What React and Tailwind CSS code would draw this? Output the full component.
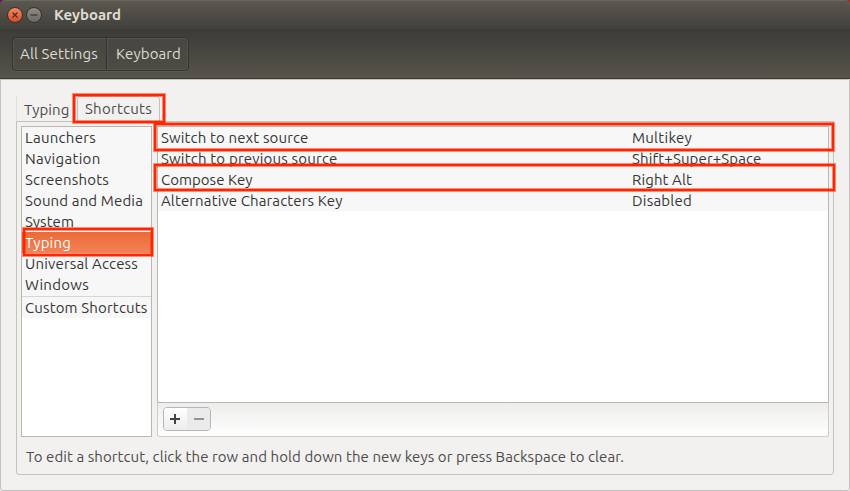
import { useLayoutEffect, useRef } from "react";

// Text run whose tracking is adjusted so that it spans the given width.
function T({ w, children }) {
  const ref = useRef(null);
  useLayoutEffect(() => {
    const fit = () => {
      const el = ref.current;
      if (!el) return;
      el.style.letterSpacing = "0px";
      const natural = el.getBoundingClientRect().width;
      el.style.letterSpacing = `${(w - natural) / children.length}px`;
    };
    fit();
    document.fonts?.ready.then(fit);
  }, [w, children]);
  return (
    <span ref={ref} className="inline-block whitespace-nowrap">
      {children}
    </span>
  );
}

const categories = [
  ["Launchers", 71],
  ["Navigation", 75.5],
  ["Screenshots", 84],
  ["Sound and Media", 118],
  ["System", 49],
  ["Typing", 46],
  ["Universal Access", 113],
  ["Windows", 64],
];

const shortcuts = [
  ["Switch to next source", 147.5, "Multikey", 60],
  ["Switch to previous source", 176.5, "Shift+Super+Space", 129.5],
  ["Compose Key", 91.5, "Right Alt", 60],
  ["Alternative Characters Key", 181.5, "Disabled", 60],
];

function Highlight({ className }) {
  return (
    <div
      className={`pointer-events-none absolute border-2 border-[#ff2600] shadow-[0_0_0_1px_#ff260080,inset_0_0_0_1px_#ff260080] ${className}`}
    />
  );
}

function WindowButton({ close }) {
  return (
    <span
      className={`flex size-4 items-center justify-center rounded-full border border-[#33322e] bg-linear-to-b ${
        close ? "from-[#f58560] to-[#dc4c1c]" : "from-[#8e8c84] to-[#6b6963]"
      }`}
    >
      <svg width="8" height="8" viewBox="0 0 8 8" fill="none" stroke="#373530" strokeWidth="1.2">
        <path d={close ? "M1.5 1.5 6.5 6.5M6.5 1.5 1.5 6.5" : "M.5 4H7.5"} />
      </svg>
    </span>
  );
}

export default function App() {
  return (
    <div className="relative flex h-[491px] w-[850px] flex-col overflow-hidden bg-[#f2f1f0] font-['Ubuntu','Noto_Sans',sans-serif] text-[15px] leading-[21px] text-[#363636]">
      <div className="shrink-0 bg-linear-to-r from-[#641d50] to-[#a52c2c]">
        <header className="flex h-[29px] items-center rounded-t-[5px] border-t border-[#6a675e] bg-linear-to-b from-[#5b5850] to-[#41403b] pl-[7px] font-bold text-[#dfdbd2]">
          <WindowButton close />
          <span className="ml-[3px]">
            <WindowButton />
          </span>
          <span className="ml-[12px] pb-0.5">
            <T w={67}>Keyboard</T>
          </span>
        </header>
      </div>
      <nav className="flex h-[50px] shrink-0 border-b border-[#3a3934] bg-linear-to-b from-[#3c3b37] to-[#56534a] pt-2 pl-3 text-[#dfdbd2]">
        <div className="flex h-[34px] rounded-[4px] border border-[#33322e] bg-linear-to-b from-[#474640] to-[#4d4b44] shadow-[inset_0_0_0_1px_#57554d,0_1px_0_#5c5a51]">
          <button className="w-[94px] border-r border-[#33322e] pb-0.5 pl-[7px] text-left">
            <T w={78}>All Settings</T>
          </button>
          <button className="w-[81px] border-l border-[#57554d] pb-0.5 pl-2 text-left">
            <T w={65}>Keyboard</T>
          </button>
        </div>
      </nav>
      <main className="flex min-h-0 flex-1 flex-col rounded-b-[3px] border border-[#c4c2be] bg-[#f2f1f0] px-[15px] pt-4">
        <div className="flex h-[25px] shrink-0 items-end">
          <div className="h-[25px] w-[61px] border-l border-[#e0dedb] pt-[3px] pl-[7px] text-[#4c4c4c]">
            <T w={45.5}>Typing</T>
          </div>
          <div className="h-[25px] w-[83px] rounded-t-[4px] border border-b-0 border-[#c4c2be] pt-px pl-[7px] text-[#4c4c4c]">
            <T w={67}>Shortcuts</T>
          </div>
        </div>
        <section className="flex h-[354px] w-[818px] flex-col rounded-b-[3px] border border-[#c4c2be] px-1 pt-1">
          <div className="flex h-[311px] gap-[5px]">
            <div className="w-[131px] border border-[#b9b7b3] bg-white">
              {categories.map(([name, w]) => (
                <div
                  key={name}
                  className={`h-[21px] pl-[3px] ${
                    name === "Typing" ? "bg-linear-to-b from-[#eb6a36] to-[#f28257] text-white" : "bg-[#f7f7f7]"
                  }`}
                >
                  <T w={w}>{name}</T>
                </div>
              ))}
              <div className="h-[23px] bg-[#f7f7f7] pt-px">
                <div className="border-t border-[#d8d6d3] pl-[3px]">
                  <T w={122.5}>Custom Shortcuts</T>
                </div>
              </div>
            </div>
            <div className="flex w-[672px] flex-col">
              <div className="h-[277px] border border-[#b9b7b3] bg-white">
                {shortcuts.map(([name, w, keys, kw]) => (
                  <div key={name} className="flex h-[21px] bg-[#f7f7f7] pl-[3px]">
                    <span className="w-[471px]">
                      <T w={w}>{name}</T>
                    </span>
                    <T w={kw}>{keys}</T>
                  </div>
                ))}
              </div>
              <div className="h-[34px] rounded-b-[3px] border border-t-0 border-[#cfcdc9] bg-linear-to-b from-[#eeedeb] to-white pt-1 pl-[5px]">
                <div className="flex h-6 w-12 overflow-hidden rounded-[4px] border border-[#b8b6b3]">
                  <button className="flex w-[23px] items-center justify-center bg-linear-to-b from-white to-[#ededed] pr-px">
                    <svg width="10" height="10" viewBox="0 0 10 10" stroke="#444" strokeWidth="2">
                      <path d="M5 0V10M0 5H10" />
                    </svg>
                  </button>
                  <button className="flex w-[23px] items-center justify-center bg-[#ebebeb]">
                    <svg width="10" height="10" viewBox="0 0 10 10" stroke="#96938e" strokeWidth="2">
                      <path d="M0 5H10" />
                    </svg>
                  </button>
                </div>
              </div>
            </div>
          </div>
          <p className="mt-[9px] pl-[5px] text-[#4c4c4c]">
            <T w={598}>To edit a shortcut, click the row and hold down the new keys or press Backspace to clear.</T>
          </p>
        </section>
      </main>
      <Highlight className="top-[94px] left-[73px] h-[29px] w-[92px]" />
      <Highlight className="top-[123px] left-[154px] h-[28px] w-[680px]" />
      <Highlight className="top-[164px] left-[154px] h-[27px] w-[681px]" />
      <Highlight className="top-[228px] left-[23px] h-[28px] w-[130px]" />
    </div>
  );
}
